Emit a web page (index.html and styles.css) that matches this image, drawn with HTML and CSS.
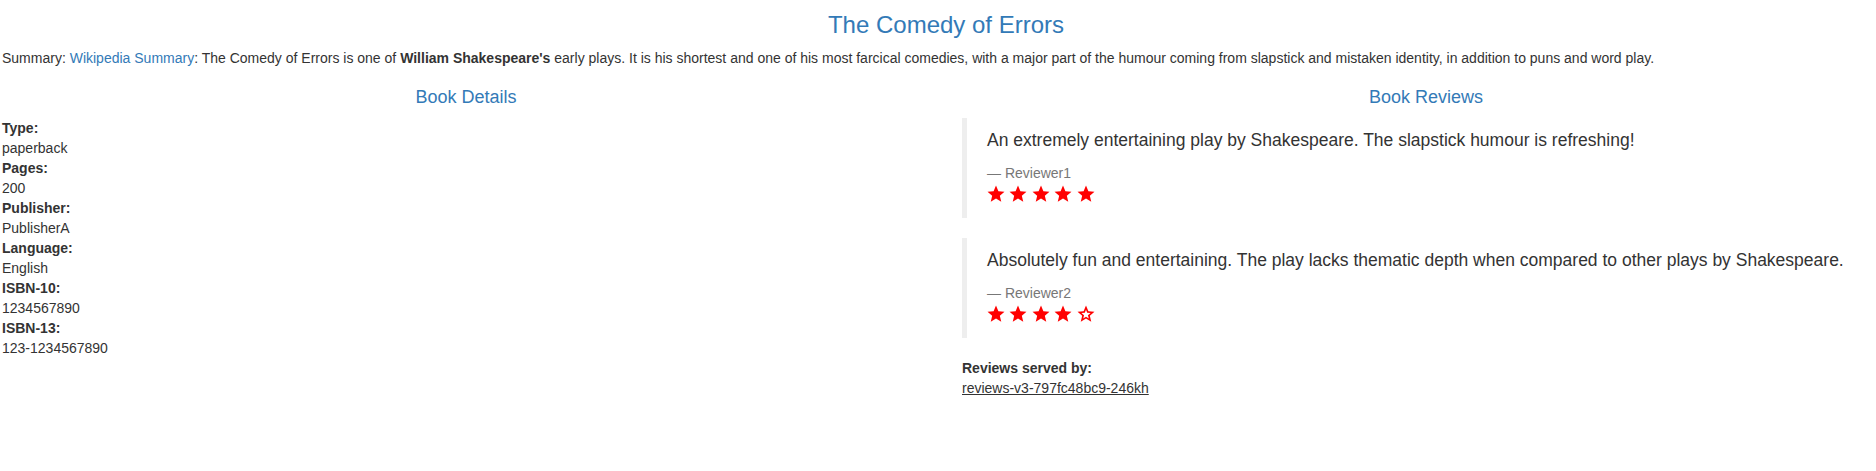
FILE: index.html
```html
<!DOCTYPE html>
<html lang="en">
<head>
<meta charset="utf-8">
<title>Simple Bookstore App</title>
<link rel="stylesheet" href="styles.css">
</head>
<body>
<svg class="defs" width="0" height="0" aria-hidden="true">
  <defs>
    <symbol id="star" viewBox="0 0 24 24">
      <polygon points="12,0.8 15.2,8.3 23.3,9 17.1,14.3 19,22.3 12,18 5,22.3 6.9,14.3 0.7,9 8.8,8.3"/>
    </symbol>
    <symbol id="star-empty" viewBox="0 0 24 24">
      <path fill-rule="evenodd" d="M12 0.8 L15.2 8.3 L23.3 9 L17.1 14.3 L19 22.3 L12 18 L5 22.3 L6.9 14.3 L0.7 9 L8.8 8.3 Z M12 6.2 L13.6 10.4 L18.1 10.7 L14.6 13.6 L15.7 18 L12 15.6 L8.3 18 L9.4 13.6 L5.9 10.7 L10.4 10.4 Z"/>
    </symbol>
  </defs>
</svg>
<div class="page">
  <h3 class="title">The Comedy of Errors</h3>
  <p class="summary">Summary: <a class="link" href="#">Wikipedia Summary</a>: The Comedy of Errors is one of <b>William Shakespeare's</b> early plays. It is his shortest and one of his most farcical comedies, with a major part of the humour coming from slapstick and mistaken identity, in addition to puns and word play.</p>
  <div class="columns">
    <div class="col">
      <h4 class="section-title">Book Details</h4>
      <dl class="details">
        <dt>Type:</dt><dd>paperback</dd>
        <dt>Pages:</dt><dd>200</dd>
        <dt>Publisher:</dt><dd>PublisherA</dd>
        <dt>Language:</dt><dd>English</dd>
        <dt>ISBN-10:</dt><dd>1234567890</dd>
        <dt>ISBN-13:</dt><dd>123-1234567890</dd>
      </dl>
    </div>
    <div class="col">
      <h4 class="section-title">Book Reviews</h4>
      <blockquote class="review">
        <p class="review-text">An extremely entertaining play by Shakespeare. The slapstick humour is refreshing!</p>
        <small class="reviewer">Reviewer1</small>
        <div class="stars">
          <svg class="star"><use href="#star"/></svg>
          <svg class="star"><use href="#star"/></svg>
          <svg class="star"><use href="#star"/></svg>
          <svg class="star"><use href="#star"/></svg>
          <svg class="star"><use href="#star"/></svg>
        </div>
      </blockquote>
      <blockquote class="review">
        <p class="review-text">Absolutely fun and entertaining. The play lacks thematic depth when compared to other plays by Shakespeare.</p>
        <small class="reviewer">Reviewer2</small>
        <div class="stars">
          <svg class="star"><use href="#star"/></svg>
          <svg class="star"><use href="#star"/></svg>
          <svg class="star"><use href="#star"/></svg>
          <svg class="star"><use href="#star"/></svg>
          <svg class="star"><use href="#star-empty"/></svg>
        </div>
      </blockquote>
      <dl class="details">
        <dt>Reviews served by:</dt>
        <dd><u>reviews-v3-797fc48bc9-246kh</u></dd>
      </dl>
    </div>
  </div>
</div>
</body>
</html>
```

FILE: styles.css
```css
html, body {
  overflow: hidden;
}
body {
  margin: 0;
  background: #fff;
  color: #333;
  font-family: "Liberation Sans", Arial, Helvetica, sans-serif;
  font-size: 14px;
  line-height: 20px;
}
.defs {
  position: absolute;
  width: 0;
  height: 0;
}
.page {
  width: 1888px;
  padding: 12px 0 0 2px;
}
.title {
  margin: 0 0 10px;
  font-size: 24px;
  font-weight: 500;
  line-height: 26.4px;
  text-align: center;
  color: #337ab7;
}
.summary {
  margin: 0 0 10px;
  white-space: nowrap;
}
.link {
  color: #337ab7;
  text-decoration: none;
}
.columns {
  display: grid;
  grid-template-columns: 928px 928px;
  column-gap: 32px;
}
.section-title {
  margin: 10px 0;
  font-size: 18px;
  font-weight: 500;
  line-height: 19.8px;
  text-align: center;
  color: #337ab7;
}
.details {
  margin: 0 0 20px;
}
.details dt {
  font-weight: bold;
}
.details dd {
  margin: 0;
}
.review {
  margin: 0 0 20px;
  padding: 10px 20px;
  border-left: 5px solid #eee;
  font-size: 17.5px;
  line-height: 25px;
}
.review-text {
  margin: 0 0 10px;
}
.reviewer {
  display: block;
  font-size: 14px;
  line-height: 20px;
  color: #777;
}
.reviewer::before {
  content: "\2014 \00A0";
}
.stars {
  display: flex;
  align-items: flex-start;
  gap: 4.4px;
  height: 25px;
  padding-top: 2px;
  box-sizing: border-box;
  color: #f00;
}
.star {
  width: 18px;
  height: 18px;
  fill: #f00;
}
```
